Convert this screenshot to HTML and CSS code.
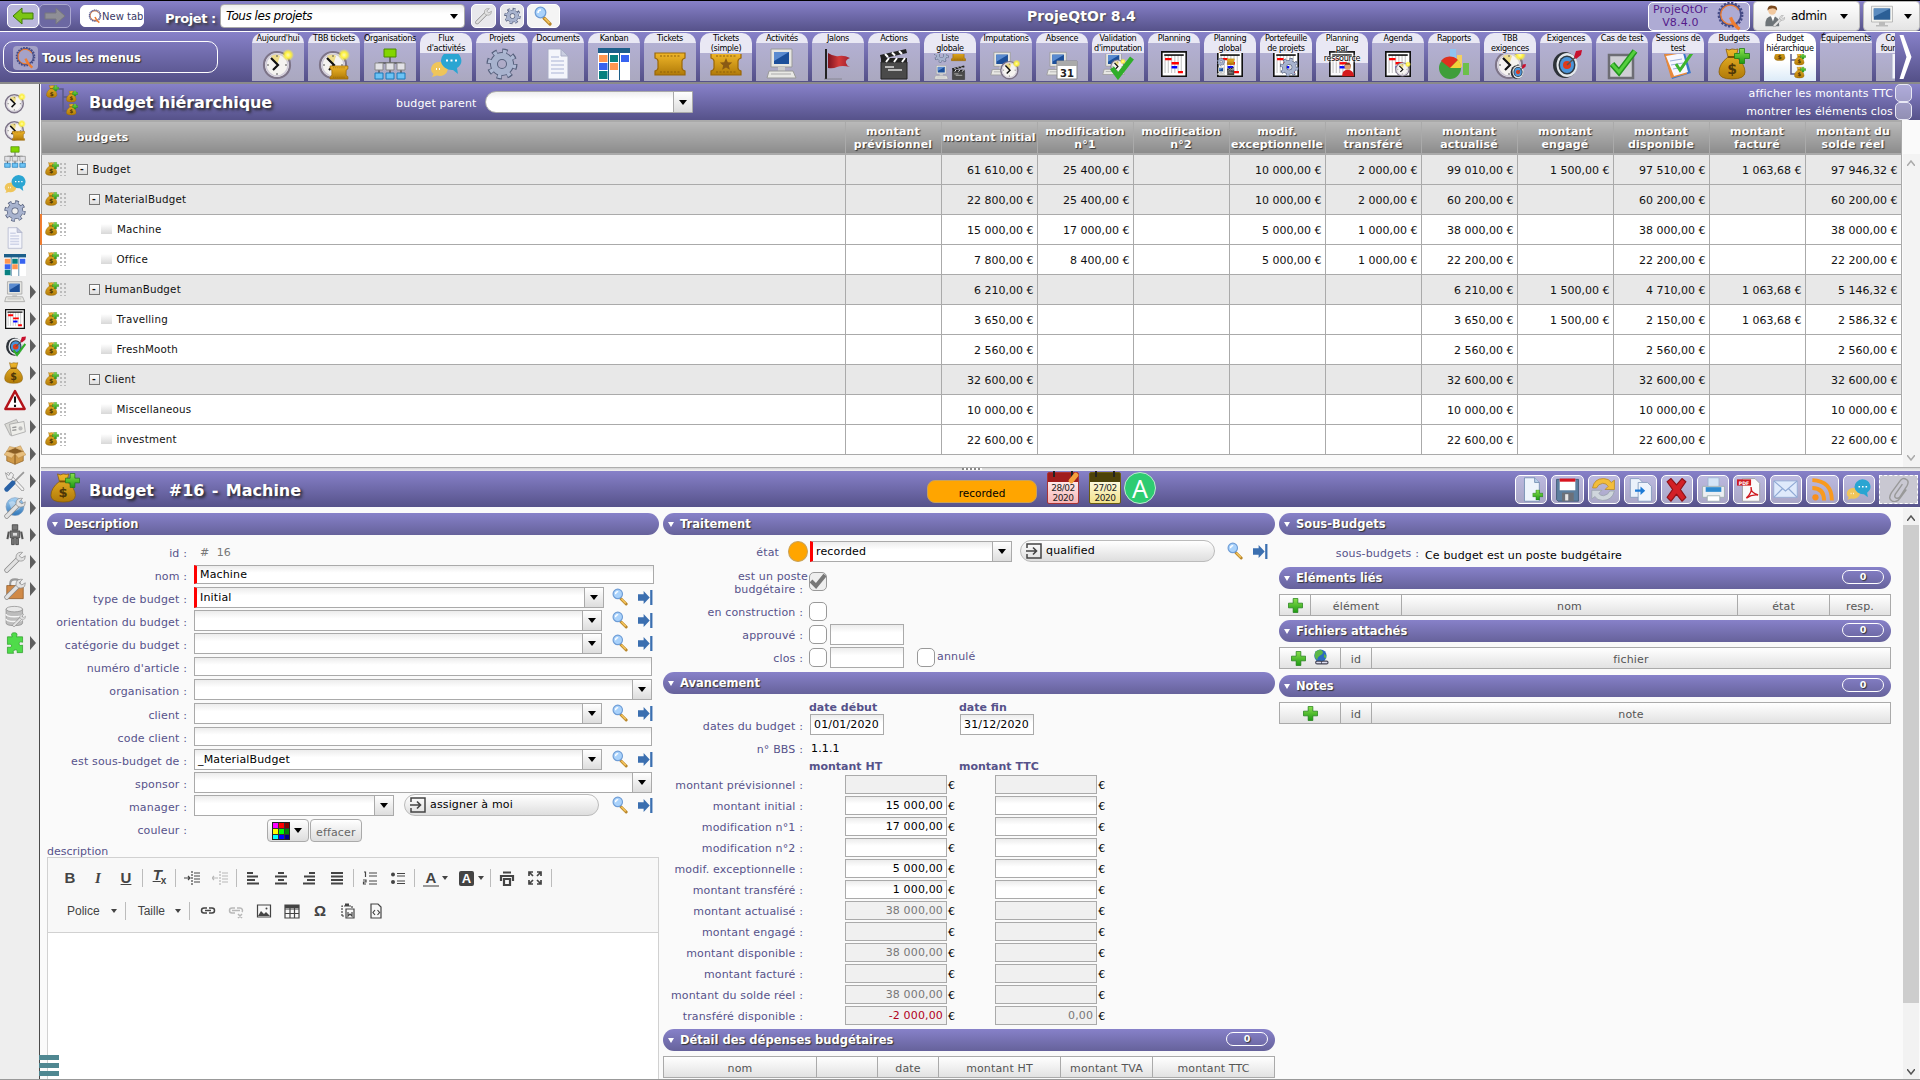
FILE: index.html
```html
<!DOCTYPE html>
<html lang="fr">
<head>
<meta charset="utf-8">
<title>ProjeQtOr 8.4</title>
<link rel="stylesheet" href="styles.css">
</head>
<body>
<svg class="defs" width="0" height="0">
<defs>
<linearGradient id="g-gold" x1="0" y1="0" x2="0" y2="1"><stop offset="0" stop-color="#f0b72a"/><stop offset="1" stop-color="#b07a08"/></linearGradient>
<linearGradient id="g-green" x1="0" y1="0" x2="0" y2="1"><stop offset="0" stop-color="#8be04e"/><stop offset="1" stop-color="#1c9a12"/></linearGradient>
<linearGradient id="g-flag" x1="0" y1="0" x2="1" y2="0"><stop offset="0" stop-color="#7d1420"/><stop offset=".5" stop-color="#d23a3a"/><stop offset="1" stop-color="#a02030"/></linearGradient>
<linearGradient id="g-blue" x1="0" y1="0" x2="0" y2="1"><stop offset="0" stop-color="#a9d4f5"/><stop offset="1" stop-color="#2f76b8"/></linearGradient>
<radialGradient id="g-sun"><stop offset="0" stop-color="#fffbb0"/><stop offset=".5" stop-color="#fdf03c"/><stop offset="1" stop-color="#fdf03c" stop-opacity="0"/></radialGradient>
<symbol id="clock" viewBox="0 0 32 32"><circle cx="15" cy="17" r="13" fill="#f5f3f0" stroke="#7d7488" stroke-width="2.2"/><circle cx="15" cy="17" r="11" fill="none" stroke="#cfcad8" stroke-width="1.400"/><path d="M15 17L9 8Q15 5 18 8Z" fill="#eedd8c"/><path d="M9 10l7 7-5 5" fill="none" stroke="#111" stroke-width="2.2"/><path d="M15 7v2M15 25v2M5 17h2M23 17h2" stroke="#555"/><circle cx="26" cy="7" r="6" fill="url(#g-sun)"/></symbol>
<symbol id="tick" viewBox="0 0 32 32"><path d="M1 5h30v5q-3 1-3 3v7q0 2 3 3v4H1v-4q3-1 3-3v-7q0-2-3-3z" fill="url(#g-gold)" stroke="#9a6708" stroke-width="1.2"/><path d="M6 8h20M6 24h20" stroke="#8d5f0b" stroke-dasharray="2 1.5"/></symbol>
<symbol id="tickstar" viewBox="0 0 32 32"><use href="#tick"/><path d="M16 10l1.8 4.2 4.4.3-3.4 2.9 1.1 4.4-3.9-2.4-3.9 2.4 1.1-4.4-3.4-2.9 4.4-.3z" fill="#8a5a14"/></symbol>
<symbol id="clocktick" viewBox="0 0 32 32"><use href="#clock"/><svg x="10" y="15" width="22" height="19"><use href="#tick"/></svg></symbol>
<symbol id="org" viewBox="0 0 32 32"><path d="M16 9v6M5 19v-4h22v4M16 15v12M5 20v6M27 20v6" stroke="#555" fill="none" stroke-width="1.4"/><path d="M10 1h12v8H10z" fill="#83d600" stroke="#4c8a00"/><path d="M1 15h8v7H1zM12 15h8v7h-8zM23 15h8v7h-8z" fill="#e2e2e6" stroke="#888"/><path d="M1 25h8v6H1zM12 25h8v6h-8zM23 25h8v6h-8z" fill="#6cc3f5" stroke="#1b79b8"/></symbol>
<symbol id="chat" viewBox="0 0 32 32"><path d="M9 14a8 7 0 1 1-2 13.500L2 29l1.500-3A8 7 0 0 1 9 14z" fill="#efc55a"/><path d="M21 3a11 9.500 0 1 0 2 19l5 4-1-6A11 9.500 0 0 0 21 3z" fill="#2aa5d2"/><path d="M16 12.500h2M20.500 12.500h2M25 12.500h2M6 21h1M9 21h1" stroke="#fff" stroke-width="2"/></symbol>
<symbol id="gear" viewBox="0 0 32 32"><circle cx="16" cy="16" r="12.500" fill="none" stroke="#56607c" stroke-width="6" stroke-dasharray="4.900 4.900"/><circle cx="16" cy="16" r="8" fill="none" stroke="#56607c" stroke-width="8"/><circle cx="16" cy="16" r="12" fill="none" stroke="#aeb9d4" stroke-width="4.500" stroke-dasharray="3.500 5.920" stroke-dashoffset="-.6"/><circle cx="16" cy="16" r="8" fill="none" stroke="#a8b3ce" stroke-width="6"/></symbol>
<symbol id="doc" viewBox="0 0 32 32"><path d="M6 1h13l7 7v23H6z" fill="#f4f5fb" stroke="#a9adc6"/><path d="M19 1v7h7z" fill="#c9cde0" stroke="#a9adc6"/><path d="M9 9h8M9 13h13M9 17h13M9 21h13M9 25h13" stroke="#cfd4e8" stroke-width="2"/></symbol>
<symbol id="kanban" viewBox="0 0 32 32"><path d="M0 0h32v32H0z" fill="#fff"/><path d="M0 0h32v5H0z" fill="#1c5f8a"/><path d="M10.500 0v32M21.500 0v32" stroke="#1c5f8a"/><path d="M1 7h8.500v7H1zM12 15h8v7h-8z" fill="#ff9650"/><path d="M12 7h8v7h-8zM1 23h8.500v8H1z" fill="#078080"/><path d="M23 7h8v7h-8zM1 15h8.500v7H1z" fill="#3763f0"/></symbol>
<symbol id="pc" viewBox="0 0 32 32"><path d="M5 1h21v18H5z" fill="#e6e6e2" stroke="#999"/><path d="M8 4h15v12H8z" fill="#1c4f9a"/><path d="M8 4h15L8 13z" fill="#5a8bd0"/><path d="M12 19h7v4h-7z" fill="#ccc"/><path d="M3 23h24l3 7H1z" fill="#e8e8e4" stroke="#999"/><path d="M5 26h20" stroke="#aaa"/></symbol>
<symbol id="flag" viewBox="0 0 32 32"><path d="M4 1v30" stroke="#222" stroke-width="2"/><path d="M6 5q6 4 11 3 5-1 11 2-5 2-4 5 1 3 4 4-8-2-13 0-4 2-9 1z" fill="url(#g-flag)"/><path d="M2 31h18" stroke="#666" opacity=".5"/></symbol>
<symbol id="clap" viewBox="0 0 32 32"><path d="M3 14h26v17H3z" fill="#4a4a4a" stroke="#222"/><path d="M3 10h26v4H3z" fill="#222"/><path d="M2 7L28 1l1 4L3 11z" fill="#222"/><path d="M7 6l3 3M14 4.500l3 3M21 3l3 3M8 14l3-4M16 14l3-4M24 14l3-4" stroke="#fff" stroke-width="2"/><path d="M7 19h9M10 22h14" stroke="#ddd" stroke-width="1.400"/></symbol>
<symbol id="liste" viewBox="0 0 32 32"><svg width="15" height="15"><use href="#gear"/></svg><svg x="17" width="15" height="15"><use href="#tick"/></svg><svg y="17" width="15" height="15"><use href="#pc"/></svg><svg x="17" y="17" width="15" height="15"><use href="#clap"/></svg></symbol>
<symbol id="pcclock" viewBox="0 0 32 32"><svg width="25" height="32"><use href="#pc"/></svg><svg x="9" y="11" width="22" height="21"><use href="#clock"/></svg></symbol>
<symbol id="absence" viewBox="0 0 32 32"><svg width="25" height="32"><use href="#pc"/></svg><path d="M11 13h20v18H11z" fill="#fff" stroke="#888"/><path d="M11 13h20v5H11z" fill="#aaa"/><text x="21" y="29" class="ico-t">31</text></symbol>
<symbol id="valid" viewBox="0 0 32 32"><svg width="24" height="32"><use href="#pc"/></svg><svg x="8" y="9" width="16" height="18"><use href="#clock"/></svg><path d="M10 20l6 8L30 10" fill="none" stroke="#2fae2a" stroke-width="5"/></symbol>
<symbol id="plan" viewBox="0 0 32 32"><path d="M1 1h30v30H1z" fill="#fff" stroke="#111" stroke-width="2"/><path d="M5 5v22M9 5v22M13 5v22M17 5v22M21 5v22M25 5v22" stroke="#ccc" stroke-width="1.500"/><path d="M4 5h24" stroke="#111" stroke-width="2"/><path d="M5 10h8M13 15h9M21 26h6" stroke="#f00" stroke-width="3"/><path d="M13 20h7" stroke="#00f" stroke-width="3"/></symbol>
<symbol id="planglobal" viewBox="0 0 32 32"><use href="#plan"/><svg y="8" width="22" height="22"><use href="#liste"/></svg></symbol>
<symbol id="plangear" viewBox="0 0 32 32"><use href="#plan"/><svg x="8" y="8" width="24" height="24"><use href="#gear"/></svg></symbol>
<symbol id="planuser" viewBox="0 0 32 32"><use href="#plan"/><circle cx="23" cy="19" r="4" fill="#e0a070"/><path d="M19 20q0-6 4-6t4 6l-1-3h-6z" fill="#7a2a10"/><path d="M16 31q0-8 7-8t8 8z" fill="#d81414"/></symbol>
<symbol id="planclock" viewBox="0 0 32 32"><use href="#plan"/><svg x="12" y="12" width="20" height="20"><use href="#clock"/></svg></symbol>
<symbol id="report" viewBox="0 0 32 32"><path d="M12 1h6v15h-6z" fill="#8fc4f2"/><path d="M19 7h5v12h-5z" fill="#f5d060"/><path d="M25 15h6v12h-6z" fill="#6cc04a"/><circle cx="12" cy="20" r="11" fill="#3f9e3a"/><path d="M12 20L3 13A11 11 0 0 1 20 12z" fill="#e0301e"/><path d="M12 20l8-8a11 11 0 0 1 3 8z" fill="#f3d23a"/></symbol>
<symbol id="target" viewBox="0 0 32 32"><ellipse cx="15" cy="17" rx="12" ry="13" fill="#2d3238"/><ellipse cx="17" cy="17" rx="10.500" ry="12" fill="#e4e8ec"/><ellipse cx="17" cy="17" rx="8.500" ry="9.500" fill="#2e3a44"/><ellipse cx="17" cy="17" rx="7" ry="8" fill="#4a94d8"/><circle cx="17" cy="17" r="4" fill="#e23a1a"/><path d="M17 17L30 5" stroke="#555" stroke-width="1.500"/><path d="M24 9l2-6 6-1-1 5-5 4z" fill="#c8102e"/></symbol>
<symbol id="targetok" viewBox="0 0 32 32"><use href="#target"/><path d="M14 22l5 7L31 13" fill="none" stroke="#2fae2a" stroke-width="3"/></symbol>
<symbol id="clocktarget" viewBox="0 0 32 32"><use href="#clock"/><svg x="15" y="15" width="17" height="17"><use href="#target"/></svg></symbol>
<symbol id="check" viewBox="0 0 32 32"><path d="M3 7h24v23H3z" fill="#cfcfd4" stroke="#6d6d74" stroke-width="2.500"/><path d="M6 16l7 8L29 3" fill="none" stroke="#23951e" stroke-width="6"/><path d="M6 16l7 8L29 3" fill="none" stroke="#55cf3e" stroke-width="3"/></symbol>
<symbol id="clip" viewBox="0 0 32 32"><path d="M2 6l20-4 7 23-19 6z" fill="#3b78c9"/><path d="M2 6l18-3 5 23-16 4z" fill="#e8893a"/><path d="M4 8l17-3 5 19-14 4z" fill="#f7f7ff"/><path d="M8 13l12-2M9 17l12-2M11 21l11-2" stroke="#9ab0dc"/><path d="M14 16l4 6L30 5" fill="none" stroke="#3fb52e" stroke-width="3"/></symbol>
<symbol id="bag" viewBox="0 0 32 32"><path d="M8 1q3 2 6 0 4 1 6 0l-2 8q9 7 9 15 0 7-13 7T1 24Q1 16 10 9z" fill="url(#g-gold)" stroke="#8a5e06" stroke-width=".8"/><path d="M10 9h8" stroke="#7a4f06" stroke-width="2"/><text x="14" y="26" class="ico-d">$</text></symbol>
<symbol id="plus" viewBox="0 0 32 32"><path d="M11 1h10v10h10v10H21v10H11V21H1V11h10z" fill="url(#g-green)" stroke="#1a7a12" stroke-width="1.500"/></symbol>
<symbol id="bagplus" viewBox="0 0 32 32"><use href="#bag"/><svg x="16" y="0" width="16" height="16"><use href="#plus"/></svg></symbol>
<symbol id="tree" viewBox="0 0 32 32"><path d="M13 4h4v22h5M17 12h5" fill="none" stroke="#5a5a88" stroke-width="1.500"/><svg y="0" width="13" height="13"><use href="#bagplus"/></svg><svg x="20" y="5" width="12" height="13"><use href="#bagplus"/></svg><svg x="20" y="18" width="12" height="13"><use href="#bagplus"/></svg></symbol>
<symbol id="warn" viewBox="0 0 32 32"><path d="M16 3l14 26H2z" fill="#fff" stroke="#b3141a" stroke-width="3.500" stroke-linejoin="round"/><path d="M16 11v9M16 23v3" stroke="#111" stroke-width="3"/></symbol>
<symbol id="cards" viewBox="0 0 32 32"><path d="M1 12l17-7 8 15-17 8z" fill="#d8d8d4" stroke="#999"/><path d="M8 12l21-4 2 15-20 6z" fill="#eeeeea" stroke="#999"/><path d="M12 17l6-1M12 21l6-1" stroke="#999" stroke-width="2"/><circle cx="24" cy="18" r="3" fill="#bbb"/></symbol>
<symbol id="box" viewBox="0 0 32 32"><path d="M4 12l12 4v15L4 26zM28 12l-12 4v15l12-5z" fill="#d09a4a" stroke="#8f6224"/><path d="M4 12L16 7l12 5-12 4z" fill="#8a5e24"/><path d="M4 12L0 17l11 5 5-6zM28 12l4 5-11 5-5-6zM4 12L8 5l9 2zM28 12l-4-8-8 3z" fill="#e8bf7e" stroke="#a87a38" stroke-width=".6"/></symbol>
<symbol id="wrench" viewBox="0 0 32 32"><path d="M4 28L20 12" stroke="#888" stroke-width="7" stroke-linecap="round"/><path d="M4 28L20 12" stroke="#e2e2e2" stroke-width="5" stroke-linecap="round"/><path d="M27 2q-7-1-9 4-2 6 3 8 6 2 9-2l1-5-5 3-4-3z" fill="#e2e2e2" stroke="#888"/></symbol>
<symbol id="tools" viewBox="0 0 32 32"><path d="M6 6l21 22" stroke="#888" stroke-width="5" stroke-linecap="round"/><path d="M6 6l21 22" stroke="#f2f2f2" stroke-width="3.500" stroke-linecap="round"/><path d="M2 4l5 4 3-5 4 4-3 7-6-1z" fill="#eee" stroke="#888"/><path d="M14 18L29 3" stroke="#999" stroke-width="2.500"/><path d="M4 28L13 19" stroke="#2a62a6" stroke-width="7" stroke-linecap="round"/></symbol>
<symbol id="globew" viewBox="0 0 32 32"><circle cx="16" cy="14" r="13" fill="url(#g-blue)" stroke="#7a9cc0"/><path d="M7 8q6-4 9 0t8 2q2 6-4 9t-9-1z" fill="#fff" opacity=".4"/><use href="#wrench"/></symbol>
<symbol id="robot" viewBox="0 0 32 32"><path d="M12 1h8v8h-8zM9 10h14v10H9zM11 21h4v9h-4zM17 21h4v9h-4z" fill="#777" stroke="#333"/><path d="M7 11l-2 11M25 11l2 11" stroke="#555" stroke-width="3"/><path d="M13 13h6v4h-6z" fill="#ddd"/></symbol>
<symbol id="lockw" viewBox="0 0 32 32"><path d="M9 12V8q0-6 7-6t7 6v4" fill="none" stroke="#999" stroke-width="3"/><path d="M4 11h24v19H4z" fill="#d08a48" stroke="#84501e"/><use href="#wrench"/></symbol>
<symbol id="db" viewBox="0 0 32 32"><path d="M3 6v20q0 4 12 4t12-4V6z" fill="#bdbdbd" stroke="#888"/><ellipse cx="15" cy="6" rx="12" ry="4" fill="#e8e8e8" stroke="#888"/><path d="M3 13q0 4 12 4t12-4M3 20q0 4 12 4t12-4" fill="none" stroke="#f4f4f4" stroke-width="2"/><svg x="12" y="12" width="20" height="20"><use href="#wrench"/></svg></symbol>
<symbol id="puzzle" viewBox="0 0 32 32"><path d="M5 7h7q-3-6 3-6t3 6h9v8q-5-2-5 2t5 2v11h-8q1-5-3-4t-2 5H5v-9q6 1 6-2t-6-2z" fill="#4fdc4a" stroke="#2a9a28"/></symbol>
<symbol id="mag" viewBox="0 0 18 20"><path d="M10 12l6 6" stroke="#b8862a" stroke-width="3.200" stroke-linecap="round"/><path d="M10.500 12l5 5.200" stroke="#f3c25a" stroke-width="1.800"/><circle cx="6.500" cy="6.500" r="5.300" fill="#a9d2fb" stroke="#6f9dd6" stroke-width="1.300"/><path d="M4 7q0-3 3-3" stroke="#fff" fill="none" stroke-width="1.500"/></symbol>
<symbol id="goto" viewBox="0 0 16 16"><path d="M0 4.500h6V1l6.500 7L6 15v-3.500H0z" fill="#3b6fb0"/><path d="M13 0h2.400v16H13z" fill="#3b6fb0"/></symbol>
<symbol id="enter" viewBox="0 0 16 16"><path d="M1 5V1h14v14H1v-4" fill="none" stroke="#444" stroke-width="1.500"/><path d="M0 8h10M7 4.500L10.500 8 7 11.500" fill="none" stroke="#444" stroke-width="1.600"/></symbol>
<symbol id="arrow" viewBox="0 0 24 18"><path d="M2 9l9-8v5h11v6H11v5z" stroke-width="1"/></symbol>
<symbol id="q" viewBox="0 0 32 32"><circle cx="16" cy="14" r="13" fill="none" stroke="#454b86" stroke-width="2.500" stroke-dasharray="2.500 1.600"/><circle cx="16" cy="14" r="11.500" fill="none" stroke="#454b86" stroke-width="1.800"/><path d="M25 9a10.500 10.500 0 1 0-5 14.500" fill="none" stroke="#ef7d31" stroke-width="1.500"/><path d="M16 17q3 8 10 13" fill="none" stroke="#ef7d31" stroke-width="3.500"/></symbol>
<symbol id="user" viewBox="0 0 32 32"><circle cx="12" cy="8" r="6" fill="#f2c9a0"/><path d="M5 8q0-8 8-7 7 0 6 7-4-4-8-3-4 0-6 3z" fill="#7a4a1e"/><path d="M2 31q-1-15 10-15t10 15z" fill="#6e7478"/><path d="M10 16l3 8 3-8z" fill="#fff"/><svg x="13" y="14" width="18" height="18"><use href="#wrench"/></svg></symbol>
<symbol id="screen" viewBox="0 0 32 32"><path d="M2 3h28v21H2z" fill="#f4f4f0" stroke="#aaa"/><path d="M5 6h22v15H5z" fill="#2c5f96"/><path d="M5 6h22L5 17z" fill="#5b8cc0"/><path d="M12 24h8v4h-8zM8 28h16v2H8z" fill="#bbb"/></symbol>
<symbol id="new" viewBox="0 0 32 32"><path d="M7 1h13l6 6v24H7z" fill="#eef4fc" stroke="#6a86ac"/><path d="M20 1v6h6" fill="#b9cfe8" stroke="#6a86ac"/><svg x="17" y="16" width="14" height="14"><use href="#plus"/></svg></symbol>
<symbol id="save" viewBox="0 0 32 32"><path d="M2 3h28v28H4l-2-2z" fill="#5d7f9f" stroke="#36506c"/><path d="M6 3h20v14H6z" fill="#fff"/><path d="M6 2h20v4H6z" fill="#d8141e"/><path d="M9 20h15v11H9z" fill="#6c7078"/><path d="M13 22h4v8h-4z" fill="#e6e6e6"/></symbol>
<symbol id="refresh" viewBox="0 0 32 32"><path d="M2 14Q4 2 16 2q7 0 10 5l4-3v12H18l4-4q-2-4-7-4-6 1-8 6z" fill="#f3bd3c" stroke="#b98a22"/><path d="M30 18q-3 12-15 12-7 0-10-5l-4 3V17h13l-4 4q2 3 6 3 6-1 8-6z" fill="#cfd6dc" stroke="#98a2ac"/></symbol>
<symbol id="copy" viewBox="0 0 32 32"><path d="M3 2h11l5 5v19H3z" fill="#eaf1fa" stroke="#7d96b8"/><path d="M13 7h12l5 5v19H13z" fill="#eef4fc" stroke="#7d96b8"/><path d="M9 16h7v-4l6 5.500-6 5.500v-4H9z" fill="#1c7ad6"/></symbol>
<symbol id="del" viewBox="0 0 32 32"><path d="M4 6l5-4 7 8 7-8 5 4-7 10 7 10-5 5-7-9-7 9-5-5 7-10z" fill="#d32027" stroke="#8f1218" stroke-width="1.500" stroke-linejoin="round"/></symbol>
<symbol id="print" viewBox="0 0 32 32"><path d="M9 1h14v14H9z" fill="#d5e5f6" stroke="#9ab4cf"/><path d="M2 12h28v14H2z" fill="#eceff2" stroke="#9aa"/><path d="M6 13h20v6H6z" fill="#2f8bd0"/><path d="M8 24h16v7H8z" fill="#fff" stroke="#9aa"/></symbol>
<symbol id="pdf" viewBox="0 0 32 32"><path d="M7 2h16l6 6v23H7z" fill="#fafafa" stroke="#999"/><path d="M0 3h18v8H0z" fill="#cf1a20"/><text x="9" y="9.600" class="ico-p">PDF</text><path d="M12 27q8-8 6-14-1 7 9 10-8-1-15 4z" fill="none" stroke="#cf1a20" stroke-width="1.800"/></symbol>
<symbol id="mail" viewBox="0 0 32 32"><path d="M1 5h30v21H1z" fill="#dfeafb" stroke="#8fa9d4"/><path d="M1 5l15 13L31 5M1 26l11-11M31 26L20 15" fill="none" stroke="#8fa9d4" stroke-width="1.500"/></symbol>
<symbol id="rss" viewBox="0 0 32 32"><circle cx="7" cy="26" r="4" fill="#f98f1c"/><path d="M3 14q15 0 15 16M3 4q25 1 25 26" fill="none" stroke="#f99a1e" stroke-width="5"/></symbol>
<symbol id="paper" viewBox="0 0 32 32"><path d="M21 9l-9 13q-2 4 1 5t5-2L27 11q3-6-1-8-5-3-8 2L7 20q-5 8 1 11 6 2 10-4l8-11" fill="none" stroke="#999" stroke-width="1.800"/></symbol>
<symbol id="globelink" viewBox="0 0 32 32"><circle cx="15" cy="12" r="11" fill="#2b6bc0"/><path d="M6 5q8-6 12-2t-3 8-5 9q-8-5-4-15zM22 9q4 2 3 8l-4-3z" fill="#5cb848"/><path d="M9 24h6M19 24h7" stroke="#445" stroke-width="7" stroke-linecap="round"/><path d="M9 24h6M19 24h7" stroke="#dde" stroke-width="3" stroke-linecap="round"/></symbol>
</defs>
</svg>

<header class="top">
  <div class="btn back"><svg class="s24 ga"><use href="#arrow"/></svg></div><div class="btn fwd"><svg class="s24 na flip"><use href="#arrow"/></svg></div>
  <div class="btn newtab"><svg><use href="#q"/></svg>New tab</div>
  <b class="projet">Projet :</b>
  <div class="projsel"><i>Tous les projets</i><span class="tri"></span></div>
  <div class="btn tb1"><svg><use href="#wrench"/></svg></div>
  <div class="btn tb2"><svg><use href="#gear"/></svg></div>
  <div class="btn tb3"><svg><use href="#mag"/></svg></div>
  <b class="apptitle">ProjeQtOr 8.4</b>
  <div class="version"><span>ProjeQtOr<br>V8.4.0</span><svg><use href="#q"/></svg></div>
  <div class="admin"><svg><use href="#user"/></svg><span>admin</span><span class="tri"></span></div>
  <div class="admin mon"><svg><use href="#screen"/></svg><span class="tri"></span></div>
</header>

<nav class="bar">
  <div class="allmenus"><svg><use href="#q"/></svg><b>Tous les menus</b></div>
  <div class="items">
    <div class="it"><span>Aujourd'hui</span><svg><use href="#clock"/></svg></div>
    <div class="it"><span>TBB tickets</span><svg><use href="#clocktick"/></svg></div>
    <div class="it"><span>Organisations</span><svg><use href="#org"/></svg></div>
    <div class="it two"><span>Flux<br>d'activités</span><svg><use href="#chat"/></svg></div>
    <div class="it"><span>Projets</span><svg><use href="#gear"/></svg></div>
    <div class="it"><span>Documents</span><svg><use href="#doc"/></svg></div>
    <div class="it"><span>Kanban</span><svg><use href="#kanban"/></svg></div>
    <div class="it"><span>Tickets</span><svg><use href="#tick"/></svg></div>
    <div class="it two"><span>Tickets<br>(simple)</span><svg><use href="#tickstar"/></svg></div>
    <div class="it"><span>Activités</span><svg><use href="#pc"/></svg></div>
    <div class="it"><span>Jalons</span><svg><use href="#flag"/></svg></div>
    <div class="it"><span>Actions</span><svg><use href="#clap"/></svg></div>
    <div class="it two"><span>Liste<br>globale</span><svg><use href="#liste"/></svg></div>
    <div class="it"><span>Imputations</span><svg><use href="#pcclock"/></svg></div>
    <div class="it"><span>Absence</span><svg><use href="#absence"/></svg></div>
    <div class="it two"><span>Validation<br>d'imputation</span><svg><use href="#valid"/></svg></div>
    <div class="it"><span>Planning</span><svg class="pl"><use href="#plan"/></svg></div>
    <div class="it two"><span>Planning<br>global</span><svg class="pl"><use href="#planglobal"/></svg></div>
    <div class="it two"><span>Portefeuille<br>de projets</span><svg class="pl"><use href="#plangear"/></svg></div>
    <div class="it three"><span>Planning<br>par<br>ressource</span><svg class="pl"><use href="#planuser"/></svg></div>
    <div class="it"><span>Agenda</span><svg class="pl"><use href="#planclock"/></svg></div>
    <div class="it"><span>Rapports</span><svg><use href="#report"/></svg></div>
    <div class="it two"><span>TBB<br>exigences</span><svg><use href="#clocktarget"/></svg></div>
    <div class="it"><span>Exigences</span><svg><use href="#target"/></svg></div>
    <div class="it"><span>Cas de test</span><svg><use href="#check"/></svg></div>
    <div class="it two"><span>Sessions de<br>test</span><svg><use href="#clip"/></svg></div>
    <div class="it"><span>Budgets</span><svg><use href="#bagplus"/></svg></div>
    <div class="it two on"><span>Budget<br>hiérarchique</span><svg><use href="#tree"/></svg></div>
    <div class="it"><span>Équipements</span></div>
    <div class="it two last"><span>Co<br>four</span><svg><use href="#doc"/></svg></div>
  </div>
  <svg class="chev" viewBox="0 0 12 44"><path d="M0 0h4l8 22-8 22H0l7-22z" fill="#fff"/></svg>
</nav>

<div class="main">
<aside class="side">
  <div><svg><use href="#clock"/></svg></div>
  <div><svg><use href="#clocktick"/></svg></div>
  <div><svg><use href="#org"/></svg></div>
  <div><svg><use href="#chat"/></svg></div>
  <div><svg><use href="#gear"/></svg></div>
  <div><svg><use href="#doc"/></svg></div>
  <div><svg><use href="#kanban"/></svg></div>
  <div class="sub"><svg><use href="#pc"/></svg></div>
  <div class="sub"><svg class="flat" preserveAspectRatio="none"><use href="#plan"/></svg></div>
  <div class="sub"><svg><use href="#targetok"/></svg></div>
  <div class="sub"><svg><use href="#bag"/></svg></div>
  <div class="sub"><svg><use href="#warn"/></svg></div>
  <div class="sub"><svg><use href="#cards"/></svg></div>
  <div class="sub"><svg><use href="#box"/></svg></div>
  <div class="sub"><svg><use href="#tools"/></svg></div>
  <div class="sub"><svg><use href="#globew"/></svg></div>
  <div class="sub"><svg><use href="#robot"/></svg></div>
  <div class="sub"><svg><use href="#wrench"/></svg></div>
  <div class="sub"><svg><use href="#lockw"/></svg></div>
  <div><svg><use href="#db"/></svg></div>
  <div class="sub"><svg><use href="#puzzle"/></svg></div>
</aside>

<div class="content">
  <div class="bhead">
    <svg class="treeico"><use href="#tree"/></svg>
    <h1>Budget hiérarchique</h1>
    <span class="bp">budget parent</span>
    <div class="bpsel"><span class="dd"><span class="tri"></span></span></div>
    <div class="opts"><label>afficher les montants TTC<span class="cb2"></span></label><label>montrer les éléments clos<span class="cb2"></span></label></div>
  </div>

  <div class="gridwrap">
  <table class="grid">
    <colgroup><col class="cname"><col><col><col><col><col><col><col><col><col><col><col></colgroup>
    <thead><tr><th class="n">budgets<th>montant<br>prévisionnel<th class="nw">montant initial<th>modification<br>n°1<th>modification<br>n°2<th class="nw">modif.<br>exceptionnelle<th>montant<br>transféré<th>montant<br>actualisé<th>montant<br>engagé<th>montant<br>disponible<th>montant<br>facturé<th>montant du<br>solde réel</tr></thead>
    <tbody>
    <tr class="g"><td><div class="nm l0"><svg><use href="#bagplus"/></svg><i class="dots"></i><i class="ex">-</i>Budget</div><td><td>61 610,00 €<td>25 400,00 €<td><td>10 000,00 €<td>2 000,00 €<td>99 010,00 €<td>1 500,00 €<td>97 510,00 €<td>1 063,68 €<td>97 946,32 €</tr>
    <tr class="g"><td><div class="nm l1"><svg><use href="#bagplus"/></svg><i class="dots"></i><i class="ex">-</i>MaterialBudget</div><td><td>22 800,00 €<td>25 400,00 €<td><td>10 000,00 €<td>2 000,00 €<td>60 200,00 €<td><td>60 200,00 €<td><td>60 200,00 €</tr>
    <tr class="sel"><td><div class="nm l2"><svg><use href="#bagplus"/></svg><i class="dots"></i><i class="lf"></i>Machine</div><td><td>15 000,00 €<td>17 000,00 €<td><td>5 000,00 €<td>1 000,00 €<td>38 000,00 €<td><td>38 000,00 €<td><td>38 000,00 €</tr>
    <tr><td><div class="nm l2"><svg><use href="#bagplus"/></svg><i class="dots"></i><i class="lf"></i>Office</div><td><td>7 800,00 €<td>8 400,00 €<td><td>5 000,00 €<td>1 000,00 €<td>22 200,00 €<td><td>22 200,00 €<td><td>22 200,00 €</tr>
    <tr class="g"><td><div class="nm l1"><svg><use href="#bagplus"/></svg><i class="dots"></i><i class="ex">-</i>HumanBudget</div><td><td>6 210,00 €<td><td><td><td><td>6 210,00 €<td>1 500,00 €<td>4 710,00 €<td>1 063,68 €<td>5 146,32 €</tr>
    <tr><td><div class="nm l2"><svg><use href="#bagplus"/></svg><i class="dots"></i><i class="lf"></i>Travelling</div><td><td>3 650,00 €<td><td><td><td><td>3 650,00 €<td>1 500,00 €<td>2 150,00 €<td>1 063,68 €<td>2 586,32 €</tr>
    <tr><td><div class="nm l2"><svg><use href="#bagplus"/></svg><i class="dots"></i><i class="lf"></i>FreshMooth</div><td><td>2 560,00 €<td><td><td><td><td>2 560,00 €<td><td>2 560,00 €<td><td>2 560,00 €</tr>
    <tr class="g"><td><div class="nm l1"><svg><use href="#bagplus"/></svg><i class="dots"></i><i class="ex">-</i>Client</div><td><td>32 600,00 €<td><td><td><td><td>32 600,00 €<td><td>32 600,00 €<td><td>32 600,00 €</tr>
    <tr><td><div class="nm l2"><svg><use href="#bagplus"/></svg><i class="dots"></i><i class="lf"></i>Miscellaneous</div><td><td>10 000,00 €<td><td><td><td><td>10 000,00 €<td><td>10 000,00 €<td><td>10 000,00 €</tr>
    <tr><td><div class="nm l2"><svg><use href="#bagplus"/></svg><i class="dots"></i><i class="lf"></i>investment</div><td><td>22 600,00 €<td><td><td><td><td>22 600,00 €<td><td>22 600,00 €<td><td>22 600,00 €</tr>
    </tbody>
  </table>
  <div class="sb1"><svg viewBox="0 0 8 6"><path d="M0 6l4-5 4 5" /></svg><svg viewBox="0 0 8 6"><path d="M0 0l4 5 4-5"/></svg></div>
  </div>
  <div class="split"><i></i></div>

  <div class="dhead">
    <svg class="bagico"><use href="#bagplus"/></svg>
    <h1>Budget&nbsp; #16 - Machine</h1>
    <div class="status">recorded</div>
    <div class="cal red">28/02<br>2020</div>
    <div class="cal yel">27/02<br>2020</div>
    <div class="ava">A</div>
    <div class="acts">
      <span><svg><use href="#new"/></svg></span><span><svg><use href="#save"/></svg></span><span><svg><use href="#refresh"/></svg></span><span><svg><use href="#copy"/></svg></span><span><svg><use href="#del"/></svg></span><span><svg><use href="#print"/></svg></span><span><svg><use href="#pdf"/></svg></span><span><svg><use href="#mail"/></svg></span><span><svg><use href="#rss"/></svg></span><span><svg><use href="#chat"/></svg></span><span class="drop"><svg><use href="#paper"/></svg></span>
    </div>
  </div>

  <div class="detail">
    <section class="c1">
      <h2>Description</h2>
      <div class="form">
        <div class="r"><label>id :</label><span class="idv">#&nbsp; 16</span></div>
        <div class="r"><label>nom :</label><div class="f req w460">Machine</div></div>
        <div class="r"><label>type de budget :</label><div class="f s req w410">Initial<span class="dd"><span class="tri"></span></span></div><svg class="mag"><use href="#mag"/></svg><svg class="go"><use href="#goto"/></svg></div>
        <div class="r"><label>orientation du budget :</label><div class="f s w408"><span class="dd"><span class="tri"></span></span></div><svg class="mag"><use href="#mag"/></svg><svg class="go"><use href="#goto"/></svg></div>
        <div class="r"><label>catégorie du budget :</label><div class="f s w408"><span class="dd"><span class="tri"></span></span></div><svg class="mag"><use href="#mag"/></svg><svg class="go"><use href="#goto"/></svg></div>
        <div class="r"><label>numéro d'article :</label><div class="f w458"></div></div>
        <div class="r t24"><label>organisation :</label><div class="f s w458"><span class="dd"><span class="tri"></span></span></div></div>
        <div class="r"><label>client :</label><div class="f s w408"><span class="dd"><span class="tri"></span></span></div><svg class="mag"><use href="#mag"/></svg><svg class="go"><use href="#goto"/></svg></div>
        <div class="r"><label>code client :</label><div class="f w458"></div></div>
        <div class="r"><label>est sous-budget de :</label><div class="f s w408 nop">_MaterialBudget<span class="dd"><span class="tri"></span></span></div><svg class="mag"><use href="#mag"/></svg><svg class="go"><use href="#goto"/></svg></div>
        <div class="r"><label>sponsor :</label><div class="f s w458"><span class="dd"><span class="tri"></span></span></div></div>
        <div class="r"><label>manager :</label><div class="f s w200"><span class="dd"><span class="tri"></span></span></div><div class="pb asg"><svg><use href="#enter"/></svg>assigner à moi</div><svg class="mag m2"><use href="#mag"/></svg><svg class="go"><use href="#goto"/></svg></div>
        <div class="r"><label>couleur :</label><div class="cbtn"><span class="pal"></span><span class="tri"></span></div><div class="cbtn eff">effacer</div></div>
      </div>
      <div class="dlabel">description</div>
      <div class="ed">
        <div class="edt">
          <div class="er">
            <b class="x1">B</b><b class="x2"><i>I</i></b><b class="x3"><u>U</u></b><em></em><b class="x4"><i><u>T</u></i><sub>x</sub></b><em></em>
            <svg viewBox="0 0 16 16"><path d="M8 1v14" stroke-dasharray="2 1"/><path d="M10 3h6M10 6h6M10 9h6M10 12h6M0 8h6M4 6l2 2-2 2"/></svg>
            <svg class="dis" viewBox="0 0 16 16"><path d="M8 1v14" stroke-dasharray="2 1"/><path d="M10 3h6M10 6h6M10 9h6M10 12h6M0 8h6M2 6L0 8l2 2"/></svg><em></em>
            <svg class="h" viewBox="0 0 16 16"><path d="M2 3h6M2 6.500h11M2 10h8M2 13.500h12"/></svg>
            <svg class="h" viewBox="0 0 16 16"><path d="M5 3h6M2 6.500h12M5 10h6M2 13.500h12"/></svg>
            <svg class="h" viewBox="0 0 16 16"><path d="M8 3h6M3 6.500h11M6 10h8M2 13.500h12"/></svg>
            <svg class="h" viewBox="0 0 16 16"><path d="M2 3h12M2 6.500h12M2 10h12M2 13.500h12"/></svg><em></em>
            <svg viewBox="0 0 16 16"><path d="M7 3h8M7 6h8M7 11h8M7 14h8M2 2h1.500v5M1 10h3v2H1.500v2H4"/></svg>
            <svg viewBox="0 0 16 16"><path d="M7 3.500h8M7 6h8M7 11h8M7 13.500h8"/><circle cx="3" cy="4.500" r="2"/><circle cx="3" cy="12" r="2"/></svg><em></em>
            <b class="ca">A</b><span class="tri sm"></span><b class="cbg">A</b><span class="tri sm"></span><em></em>
            <svg class="h" viewBox="0 0 16 16"><path d="M4 2.500h8M1 6h14M2 5v6M14 5v6M5 9h6v6H5z"/></svg>
            <svg class="fs" viewBox="0 0 16 16"><path d="M2 6V2h4M2 2l4 4M14 6V2h-4M14 2l-4 4M2 10v4h4M2 14l4-4M14 10v4h-4M14 14l-4-4"/></svg><em></em>
          </div>
          <div class="er r2">
            <span class="pol">Police</span><span class="tri sm"></span><em></em><span class="tai">Taille</span><span class="tri sm"></span><em class="e2"></em>
            <svg viewBox="0 0 16 16"><path d="M7 5H4a2.500 2.500 0 0 0 0 5h3M9 5h3a2.500 2.500 0 0 1 0 5H9M5 7.500h6" stroke-width="1.500"/></svg>
            <svg class="dis" viewBox="0 0 16 16"><path d="M7 5H4a2.500 2.500 0 0 0 0 5h3M9 5h3a2.500 2.500 0 0 1 2 4M4 7.500h8M10 11l4 4M14 11l-4 4" stroke-width="1.500"/></svg>
            <svg viewBox="0 0 16 16"><path d="M1.500 2h13v12h-13z"/><path d="M2 13l3-5 3 3 2-2 4 4z" class="k"/><circle cx="10.500" cy="5.500" r="1"/></svg>
            <svg viewBox="0 0 16 16"><path d="M1 2h14v13H1zM1 6h14M1 10.500h14M6 5v10M10.500 5v10"/><path d="M1 2h14v3H1z" class="k"/></svg>
            <b class="om">Ω</b>
            <svg viewBox="0 0 16 16"><path d="M2 13V3h3M9 3h3v3M2 13h2" stroke-dasharray="2 1"/><path d="M5 2h4" stroke-width="3"/><path d="M6 6h8v9H6zM8 9v4l2-2 2 2V9"/></svg>
            <svg viewBox="0 0 16 16"><path d="M3 1h7l3 3v11H3zM7 7L5 9.500 7 12M9.500 7l2 2.500-2 2.500"/></svg>
          </div>
        </div>
      </div>
    </section>

    <section class="c2">
      <h2>Traitement</h2>
      <div class="form trait">
        <div class="r"><label class="et">état</label><span class="dot"></span><div class="f s req w202">recorded<span class="dd"><span class="tri"></span></span></div><div class="pb qual"><svg><use href="#enter"/></svg>qualified</div><svg class="mag"><use href="#mag"/></svg><svg class="go"><use href="#goto"/></svg></div>
        <div class="r ep"><label>est un poste<br><span>budgétaire :</span></label><span class="cb ck"><svg viewBox="0 0 16 16"><path d="M1 8l5 5 9-11" fill="none" stroke="#777" stroke-width="4"/></svg></span></div>
        <div class="r"><label>en construction :</label><span class="cb"></span></div>
        <div class="r"><label>approuvé :</label><span class="cb"></span><div class="f s w74"></div></div>
        <div class="r"><label>clos :</label><span class="cb"></span><div class="f s w74"></div><span class="cb an"></span><span class="anl">annulé</span></div>
      </div>
      <h2>Avancement</h2>
      <div class="av">
        <div class="hd"><b>date début</b><b>date fin</b></div>
        <div class="r dt"><label>dates du budget :</label><div class="f s d">01/01/2020</div><div class="f s d d2">31/12/2020</div></div>
        <div class="r bbs"><label>n° BBS :</label><span>1.1.1</span></div>
        <div class="hd h2"><b>montant HT</b><b>montant TTC</b></div>
        <div class="am"><label>montant prévisionnel :</label><div class="f ro"></div>€<div class="f ro"></div>€</div>
        <div class="am"><label>montant initial :</label><div class="f">15 000,00</div>€<div class="f"></div>€</div>
        <div class="am"><label>modification n°1 :</label><div class="f">17 000,00</div>€<div class="f"></div>€</div>
        <div class="am"><label>modification n°2 :</label><div class="f"></div>€<div class="f"></div>€</div>
        <div class="am"><label>modif. exceptionnelle :</label><div class="f">5 000,00</div>€<div class="f"></div>€</div>
        <div class="am"><label>montant transféré :</label><div class="f">1 000,00</div>€<div class="f"></div>€</div>
        <div class="am"><label>montant actualisé :</label><div class="f ro">38 000,00</div>€<div class="f ro"></div>€</div>
        <div class="am"><label>montant engagé :</label><div class="f ro"></div>€<div class="f ro"></div>€</div>
        <div class="am"><label>montant disponible :</label><div class="f ro">38 000,00</div>€<div class="f ro"></div>€</div>
        <div class="am"><label>montant facturé :</label><div class="f ro"></div>€<div class="f ro"></div>€</div>
        <div class="am"><label>montant du solde réel :</label><div class="f ro">38 000,00</div>€<div class="f ro"></div>€</div>
        <div class="am"><label>transféré disponible :</label><div class="f ro neg">-2 000,00</div>€<div class="f ro">0,00</div>€</div>
      </div>
      <h2>Détail des dépenses budgétaires<span class="pill">0</span></h2>
      <div class="lt t1"><span>nom</span><span></span><span>date</span><span>montant HT</span><span>montant TVA</span><span>montant TTC</span></div>
    </section>

    <section class="c3">
      <h2>Sous-Budgets</h2>
      <div class="sbl"><label>sous-budgets :</label><span>Ce budget est un poste budgétaire</span></div>
      <h2>Eléments liés<span class="pill">0</span></h2>
      <div class="lt t2"><span><svg><use href="#plus"/></svg></span><span>élément</span><span>nom</span><span>état</span><span>resp.</span></div>
      <h2>Fichiers attachés<span class="pill">0</span></h2>
      <div class="lt t3"><span><svg><use href="#plus"/></svg><svg class="gl"><use href="#globelink"/></svg></span><span>id</span><span>fichier</span></div>
      <h2>Notes<span class="pill">0</span></h2>
      <div class="lt t3"><span><svg><use href="#plus"/></svg></span><span>id</span><span>note</span></div>
    </section>
    <div class="sb2"><div class="sbup"><svg viewBox="0 0 8 6"><path d="M0 6l4-5 4 5"/></svg></div><div class="thumb"></div><div class="sbup"><svg viewBox="0 0 8 6"><path d="M0 0l4 5 4-5"/></svg></div></div>
  </div>
</div>
</div>
<div class="burger"><i></i><i></i><i></i></div>
</body>
</html>
```
FILE: styles.css
```css
*{box-sizing:border-box}
body{margin:0;width:1920px;height:1080px;overflow:hidden;display:flex;flex-direction:column;background:#fafafa;font:11px/13px Verdana,"DejaVu Sans",sans-serif;letter-spacing:.15px;color:#000;position:relative}
svg{display:block;flex:none}
.defs{position:absolute}
.ico-t{font:bold 10px "DejaVu Sans",sans-serif;text-anchor:middle;fill:#222;letter-spacing:0}
.ico-d{font:bold 14px "DejaVu Sans",sans-serif;text-anchor:middle;fill:#4d3608;letter-spacing:0}
.ico-p{font:bold 6px "DejaVu Sans",sans-serif;text-anchor:middle;fill:#fff;letter-spacing:0}
.tri{display:inline-block;width:0;height:0;border:4px solid transparent;border-top:5px solid #000;border-bottom:0;flex:none}
.tri.sm{border-width:3px;border-top-width:4px;border-top-color:#444;border-bottom:0}

/* top bar */
.top{height:32px;border-top:1px solid #000;border-bottom:1px solid #fff;background:linear-gradient(#8781c9,#56528a);display:flex;align-items:center;flex:none}
.btn{height:24px;border:1px solid #fff;border-radius:5px;background:linear-gradient(#e4e4ee,#c6c4dc);display:flex;align-items:center;justify-content:center;overflow:hidden}
.btn svg{width:20px;height:20px}
.btn .s24{width:24px;height:18px}
.ga{fill:#7cc515;stroke:#3f7a08}
.na{fill:#8f8f96;stroke:#77777e}
.flip{transform:scaleX(-1)}
.back{margin-left:7px;width:32px;height:24px;background:#bbb8dc}
.fwd{width:32px;height:24px;background:#6c68a2;border-color:#aaa7cf}
.newtab{margin-left:9px;width:64px;height:22px;background:#fff;font-size:10px;color:#3a3a66;white-space:nowrap;justify-content:flex-start;padding-left:7px;letter-spacing:0}
.newtab svg{width:14px;height:17px}
.projet{margin-left:21px;width:55px;color:#fff;font-size:13px;letter-spacing:-.4px;white-space:nowrap;text-shadow:2px 2px 3px #333;padding-top:4px}
.projsel{width:245px;height:24px;background:linear-gradient(#ededed,#fff 40%);border:1px solid #aaa;border-radius:4px;display:flex;align-items:center;justify-content:space-between;padding:0 6px 0 5px;font-size:12px;letter-spacing:-.45px}
.tb1{margin-left:6px;width:25px;background:#e8e8ec}
.tb2{margin-left:4px;width:24px;background:#e8e8ec}
.tb3{margin-left:3px;width:33px;background:#f4f4f4;justify-content:flex-start;padding-left:5px}
.tb1 svg,.tb2 svg{width:17px;height:18px}
.apptitle{margin-left:467px;width:110px;font-size:14px;letter-spacing:.05px;color:#fff;text-shadow:1px 1px 2px #444;white-space:nowrap}
.version{margin-left:511px;width:102px;height:29px;border:1px solid #fff;border-radius:5px;background:#aeabd4;color:#551a8b;display:flex;text-align:center;padding:0 4px;justify-content:space-between;align-items:center}
.version svg{width:29px;height:29px}
.admin{margin-left:3px;width:107px;height:30px;background:linear-gradient(#fff,#e4e4e4);border:1px solid #bbb;border-radius:4px;display:flex;align-items:center;padding:0 11px 0 10px;font-size:12px;letter-spacing:-.4px}
.admin svg{width:22px;height:26px;margin-right:5px}
.admin .tri{margin-left:auto}
.admin.mon{width:57px;padding:0 7px 0 6px}
.admin.mon svg{height:24px;width:24px}

/* shortcut bar */
.bar{height:52px;background:linear-gradient(#8781c9,#56528a 96%);border-bottom:2px solid #8a8a8a;display:flex;flex:none;position:relative}
.allmenus{margin:9px 0 0 3px;width:215px;height:32px;border:1px solid #fff;border-radius:10px;display:flex;align-items:center;padding-left:9px;color:#fff;font-size:11.500px;letter-spacing:0;text-shadow:1px 1px 1px #333;padding-top:2px}
.allmenus svg{width:25px;height:24px;background:#a5a2c8;border-radius:4px;margin-right:4px;margin-top:-1px;padding:1px}
.items{margin-left:34px;width:1643px;display:flex;gap:4px;overflow:hidden;padding-top:1px}
.it{width:52px;height:48px;flex:none;border-radius:10px 10px 0 0;background:linear-gradient(#e9e8f4 10px,#b3b0d3 10px,#aaa8bf);position:relative;padding-top:15px}
.it span{position:absolute;top:0;left:-6px;right:-6px;font:9px/10px "DejaVu Sans Condensed","DejaVu Sans",sans-serif;letter-spacing:-.3px;text-align:center;white-space:nowrap;z-index:1}
.it.two{background:linear-gradient(#e9e8f4 20px,#b3b0d3 20px,#aaa8bf)}
.it.three{background:linear-gradient(#e9e8f4 30px,#b3b0d3 30px,#aaa8bf)}
.it.on{background:linear-gradient(#fff 60%,#dcebf8)}
.it svg{width:32px;height:32px;margin:0 auto}
.it.two svg{clip-path:inset(6px 0 0 0)}
.it .pl{width:26px;height:26px;margin-top:3px}
.it.two .pl{clip-path:inset(2px 0 0 0)}
.it.three .pl{opacity:.95}
.it.three span{text-shadow:0 0 2px #fff,0 0 2px #fff,0 0 2px #fff}
.it.last span{left:3px;right:auto;width:16px;text-align:right;letter-spacing:-.5px}
.chev{position:absolute;left:1899px;top:3px;width:13px;height:44px}

.main{display:flex;flex:1;min-height:0;border-bottom:1px solid #999}
.side{width:40px;background:#eee;border-right:1px solid #4a4a4a;flex:none;padding-top:5px}
.side div{height:27px;display:flex;align-items:center;padding-left:4px}
.side svg{width:22px;height:22px}
.side .flat{height:20px}
.side .sub::after{content:"";margin-left:4px;border:7px solid transparent;border-left:6px solid #5e5e5e;border-right:0}
.content{flex:1;min-width:0;display:flex;flex-direction:column;padding-left:1px}

h1{margin:0;font-size:16px;line-height:20px;color:#fff;text-shadow:2px 2px 3px #222;letter-spacing:-.1px;white-space:nowrap;font-weight:bold}
.bhead{height:36px;background:linear-gradient(#8781c9,#56528a);display:flex;align-items:center;color:#fff;flex:none}
.treeico{width:32px;height:32px;margin:0 11px 2px 5px}
.bhead h1{width:307px;padding-top:2px}
.bp{width:89px;padding-top:2px}
.bpsel{width:208px;height:22px;background:linear-gradient(#eee,#fff 35%);border:1px solid #aaa;border-radius:11px 0 0 11px;display:flex;justify-content:flex-end}
.opts{margin-left:auto;padding-right:8px}
.opts label{height:18px;display:flex;align-items:center;justify-content:flex-end;gap:2px;color:#fff}
.cb2{width:17px;height:18px;border:1px solid #e8e8f4;border-radius:5px;background:rgba(255,255,255,.35)}

/* budget tree */
.gridwrap{height:347px;display:flex;flex:none;background:#fafafa}
.grid{border-collapse:collapse;table-layout:fixed;width:1860px;height:333px;margin-left:-1px;align-self:flex-start;font-size:11px;letter-spacing:0}
.grid col{width:96px}
.grid .cname{width:804px}
.grid th{height:33px;padding:0;border:solid #aaa;border-width:2px 1px;background:linear-gradient(#b9b9b9,#8c8c8c);color:#fff;line-height:13px;letter-spacing:.18px;text-shadow:1px 1px 1px #333;font-size:11px}
.grid .nw{white-space:nowrap}
.grid th.nw{letter-spacing:.08px}
.grid .n{text-align:left;padding-left:35px}
.grid td{height:30px;padding:2px 3px 0 0;border:1px solid #aaa;text-align:right;background:#fff;color:#111}
.grid .g td{background:#e8e8e8}
.grid td:first-child{padding:0;text-align:left;border-left-color:#999}
.grid .sel td:first-child{border-left:2px solid #ef7d31}
.nm{display:flex;align-items:center;height:28px;font-size:10.300px;letter-spacing:.2px;padding-left:3px}
.nm svg{width:14px;height:16px}
.dots{width:7px;height:14px;background:radial-gradient(circle,#bbb 1px,transparent 1.300px) 0 0/4px 4px}
.ex{width:11px;height:11px;border:1px solid #777;background:linear-gradient(#fff,#ddd);font:bold 9px/8px "DejaVu Sans",sans-serif;text-align:center;margin-right:5px;flex:none}
.lf{width:11px;height:10px;background:linear-gradient(#fff,#d8d8d8);margin-right:5px;flex:none}
.l0 .dots{margin-right:11px}.l1 .dots{margin-right:23px}.l2 .dots{margin-right:35px}
.sb1{margin-left:auto;width:17px;margin-top:34px;background:#f3f3f3;display:flex;flex-direction:column;justify-content:space-between;padding:6px 0 6px 4px}
.sb1 svg,.sb2 svg{width:8px;height:6px;fill:none;stroke:#aaa;stroke-width:1.500}
.split{height:4px;background:linear-gradient(#999,#ddd 40%,#eee);flex:none;display:flex;justify-content:center;align-items:center}
.split i{width:20px;height:2px;margin-right:18px;background:repeating-linear-gradient(90deg,#888 0 2px,#fff 2px 4px)}

/* detail header */
.dhead{height:36px;background:linear-gradient(#8781c9,#56528a);display:flex;align-items:flex-start;flex:none}
.bagico{width:30px;height:32px;margin:1px 9px 0 9px}
.dhead h1{width:838px;padding-top:10px;letter-spacing:0;word-spacing:1.800px}
.status{margin-top:9px;width:110px;height:23px;border-radius:8px;border:1px solid #c9a25a;background:#ffa500;text-align:center;line-height:24px;font-size:10.500px;letter-spacing:0}
.cal{margin:1px 0 0 10px;width:32px;height:32px;border:1px solid #a33;border-radius:2px;font:9px/10px "DejaVu Sans",sans-serif;letter-spacing:-.5px;text-align:center;padding-top:10px;color:#222;position:relative}
.cal::before{content:"";position:absolute;left:5px;right:5px;top:-2px;height:6px;border:solid #222;border-width:0 2px}
.red{background:linear-gradient(#a01c1c 9px,#ffe9e9 9px,#f6b6b6)}
.red::after{content:"";position:absolute;right:2px;top:-1px;width:5px;height:12px;border-radius:2px;background:#f4a13c;transform:rotate(40deg)}
.yel{background:linear-gradient(#4d420a 9px,#fdf9dc 9px,#f2e28a);border-color:#6a5d10}
.ava{margin:1px 0 0 3px;width:32px;height:32px;border-radius:50%;border:1px solid #bfe9d0;background:#2ecc71;color:#fff;font:25px/30px "Noto Sans",sans-serif;text-align:center}
.acts{margin-left:359px;display:flex;gap:4px;padding-top:4px}
.acts span{width:32.400px;height:29px;border:1px solid #fff;border-radius:5px;background:linear-gradient(#bcb9df,#a9a6c6);display:flex;align-items:center;justify-content:center}
.acts svg{width:25px;height:25px}
.acts .drop{width:39px;border:1px dashed #fff;border-radius:0;background:#c9c8d2}

.detail{flex:1;min-height:0;display:flex;gap:4px;padding:6px 1px 0 6px;overflow:hidden}
section{width:612px;flex:none;color:#000}
h2{margin:0;height:22px;border-radius:11px;background:linear-gradient(#8781c9,#66629b);color:#fff;font-size:11.500px;line-height:22px;letter-spacing:0;text-shadow:1px 1px 1px #333;display:flex;align-items:center;padding:0 7px 0 5px}
h2::before{content:"";border:3.500px solid transparent;border-top:5px solid #fff;border-bottom:0;margin-right:6px}
.pill{margin-left:auto;width:42px;height:14px;border:1px solid #fff;border-radius:7px;font-size:9.500px;line-height:12px;text-align:center;margin-bottom:3px}
label{color:#56528a;text-align:right}
.form{padding-top:6px}
.r{height:23px;display:flex;align-items:flex-start}
.r label{width:140px;margin-right:7px;padding-top:5px;flex:none;white-space:nowrap}
.c1 .r label{padding-top:6px}
.t24{height:24px}
.idv{color:#777;padding:5px 0 0 6px}
.f{height:19px;margin-top:1px;border:1px solid #aaa;background:linear-gradient(#ececec,#fff 40%);padding:2px 0 0 5px;flex:none;white-space:nowrap;line-height:13px}
.f.s{height:21px;margin-top:0;padding-top:3px;display:flex}
.f.nop{padding-left:3px}
.req{border-left:3px solid #f00;padding-left:3px}
.w460{width:460px}.w458{width:458px}.w410{width:410px}.w408{width:408px}.w200{width:200px}.w202{width:202px}.w74{width:74px}
.dd{width:19px;border-left:1px solid #aaa;background:linear-gradient(#fff,#ddd);display:flex;align-items:center;justify-content:center;margin-left:auto}
.f .dd{margin-top:-3px}
.mag{width:16px;height:18px;margin:1px 0 0 10px}
.w410+.mag{margin-left:8px}
.go{width:15px;height:15px;margin:3px 0 0 10px}
.mag.m2{margin-left:13px}
.pb{height:22px;margin-top:-1px;border:1px solid #bbb;border-radius:11px;background:linear-gradient(#fff,#dedede);display:flex;align-items:center;gap:4px;padding:0 0 2px 5px}
.pb svg{width:16px;height:16px;margin-top:2px}
.asg{width:195px;margin-left:10px}
.cbtn{margin:1px 0 0 73px;width:42px;height:23px;border:1px solid #aaa;border-radius:4px;background:linear-gradient(#fff,#ddd);display:flex;align-items:center;gap:4px;padding-left:4px;flex:none}
.eff{margin-left:1px;width:52px;color:#666;padding:3px 0 0 5px}
.pal{width:18px;height:18px;border:1px solid #222;background:linear-gradient(90deg,#f0f 0 5px,#333 5px 6px,#f00 6px 11px,#333 11px 12px,#800 12px) 0 0/16px 5px no-repeat,linear-gradient(90deg,#ff0 0 5px,#333 5px 6px,#0f0 6px 11px,#333 11px 12px,#080 12px) 0 6px/16px 5px no-repeat,linear-gradient(90deg,#0ff 0 5px,#333 5px 6px,#00f 6px 11px,#333 11px 12px,#008 12px) 0 12px/16px 4px no-repeat,#333}
.dlabel{color:#56528a;margin-top:4px;height:13px;letter-spacing:0}
.ed{border:1px solid #d1d1d1;height:240px;background:#fff;margin-top:-1px}
.edt{height:75px;background:#f8f8f8;border-bottom:1px solid #d1d1d1;padding:8px 0 0 8px;color:#444}
.er{height:24px;display:flex;align-items:center;font-size:14px;letter-spacing:0}
.er.r2{margin-top:9px;font:12px/14px "Liberation Sans",Arial,sans-serif}
.er svg{width:16px;height:16px;margin:0 6px;fill:none;stroke:#444;stroke-width:1.200}
.er .h{stroke-width:2.200}
.er .fs{stroke-width:1.700}
.er .dis{opacity:.35}
.er circle,.er .k{fill:#444;stroke:none}
.er em{width:1px;height:18px;background:#bcbcbc;margin:0 2px}
.er b{font:bold 15px/18px "Liberation Sans",Arial,sans-serif;width:16px;margin:0 6px;text-align:center}
.er .x2 i{font-family:"Liberation Serif",serif}
.er .x4{letter-spacing:-1px;white-space:nowrap}
.er sub{font-size:10px}
.er b.ca{border-bottom:2px solid #999;line-height:15px;margin-right:3px}
.er b.cbg{background:#444;color:#fff;width:15px;height:15px;line-height:15px;border-radius:2px;font-size:13px;margin:0 4px 0 11px}
.er .cbg+.tri{margin-right:4px}
.pol{margin:0 11px 0 11px}.tai{margin:0 10px 0 9px}
.er.r2 .tri+em{margin:0 3px 0 8px}
.er.r2 .tri+em.e2{margin-right:4px}

.trait{height:137px}
.trait .r label{margin-right:6px}
.trait .r .et{width:116px;margin-right:9px}
.dot{width:20px;height:21px;border-radius:50%;background:#ffa500;border:1px solid #c9a25a;margin-right:2px;flex:none}
.qual{width:195px;margin-left:8px}
.qual+.mag{margin-left:12px}
.trait .ep{height:37px;padding-top:1px}
.trait .r.ep label{width:145px;margin-right:1px}
.ep label span{padding-right:5px}
.cb{width:18px;height:19px;border:1px solid #999;border-radius:5px;background:#fff;flex:none;margin-top:1px}
.ck{background:#eee;margin-top:7px}
.trait .w74{margin-left:3px}
.an{margin-left:13px}
.anl{color:#56528a;padding:3px 0 0 2px}
.av{height:335px;padding-top:7px}
.hd{height:13px;display:flex;padding-left:146px;color:#56528a;letter-spacing:0}
.hd b{width:150px}
.av .r label{margin-right:7px;padding-top:6px}
.f.d{width:74px;padding-left:3px}
.f.d2{margin-left:76px}
.bbs span{padding:5px 0 0 1px}
.hd.h2{margin-bottom:2px}
.am{height:21px;display:flex;line-height:22px}
.am label{width:140px;margin-right:42px;white-space:nowrap}
.am .f{width:102px;margin:0 1px 0 0;text-align:right;padding:2px 3px 0 0}
.am .f:nth-of-type(2){margin-left:40px}
.am .ro{background:#f0f0f0;color:#777}
.am .neg{color:#b00020}
.lt{display:grid;border:1px solid #aaa;height:22px;margin:5px 0 4px;background:linear-gradient(#fff,#e2e2e2);color:#555}
.lt span{display:flex;align-items:center;justify-content:center;border-left:1px solid #aaa;padding-top:2px;gap:6px}
.lt span:first-child{border:0;padding:0}
.t1 span:first-child{padding-top:2px!important}
.lt svg{width:15px;height:15px}
.t1{grid-template-columns:152px 61px 61px 122px 92px 1fr}
.t2{grid-template-columns:30px 91px 336px 92px 1fr}
.t3{grid-template-columns:60px 31px 1fr;margin-bottom:6px}
.lt .gl{width:18px;height:20px}
.sbl{height:32px;display:flex;padding-top:12px}
.sbl label{width:140px;margin-right:6px}
.sbl span{padding-top:2px;white-space:nowrap}
.sb2{margin-left:auto;width:16px;background:#f2f2f2;margin-top:-5px;display:flex;flex-direction:column}
.sbup{height:17px;padding:7px 0 0 4px}
.sb2 svg{stroke:#555}
.thumb{height:478px;background:#cdcdcd}
.sb2 .sbup:last-child{margin-top:auto}
.burger{position:absolute;left:39px;top:1055px;width:20px;height:21px;display:flex;flex-direction:column;justify-content:space-between}
.burger i{height:5px;background:#4f8791}
```
